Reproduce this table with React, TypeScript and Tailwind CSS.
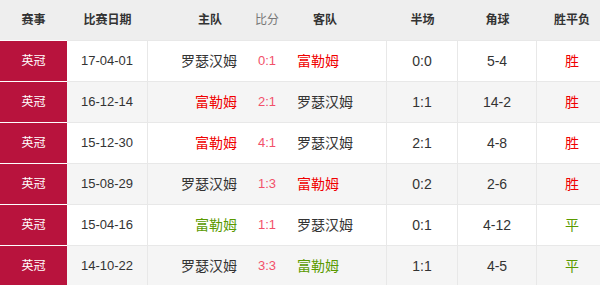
import React from "react";

type Row = {
  date: string;
  home: string;
  homeC: string;
  score: string;
  away: string;
  awayC: string;
  half: string;
  corner: string;
  res: string;
  resC: string;
};

const DARK = "text-[#333333]";
const RED = "text-[#f00000]";
const GREEN = "text-[#5a9a00]";

const rows: Row[] = [
  { date: "17-04-01", home: "罗瑟汉姆", homeC: DARK, score: "0:1", away: "富勒姆", awayC: RED, half: "0:0", corner: "5-4", res: "胜", resC: RED },
  { date: "16-12-14", home: "富勒姆", homeC: RED, score: "2:1", away: "罗瑟汉姆", awayC: DARK, half: "1:1", corner: "14-2", res: "胜", resC: RED },
  { date: "15-12-30", home: "富勒姆", homeC: RED, score: "4:1", away: "罗瑟汉姆", awayC: DARK, half: "2:1", corner: "4-8", res: "胜", resC: RED },
  { date: "15-08-29", home: "罗瑟汉姆", homeC: DARK, score: "1:3", away: "富勒姆", awayC: RED, half: "0:2", corner: "2-6", res: "胜", resC: RED },
  { date: "15-04-16", home: "富勒姆", homeC: GREEN, score: "1:1", away: "罗瑟汉姆", awayC: DARK, half: "0:1", corner: "4-12", res: "平", resC: GREEN },
  { date: "14-10-22", home: "罗瑟汉姆", homeC: DARK, score: "3:3", away: "富勒姆", awayC: GREEN, half: "1:1", corner: "4-5", res: "平", resC: GREEN },
];

const COLS = "grid grid-cols-[67px_81px_100px_38px_101px_71px_79px_70px]";
const font = { fontFamily: '"Liberation Sans", "Noto Sans CJK SC", sans-serif' };

export default function App() {
  return (
    <div className="w-[600px] h-[285px] overflow-hidden bg-white" style={font}>
      <div className="w-[607px]">
        <div className={`${COLS} h-[40px] bg-[#eeeeee] text-[12px] font-bold text-[#333333] items-center`}>
          <div className="text-center">赛事</div>
          <div className="text-center">比赛日期</div>
          <div className="text-right pr-[26px]">主队</div>
          <div className="text-center font-normal text-[#777777]">比分</div>
          <div className="text-left pl-[27px]">客队</div>
          <div className="text-center">半场</div>
          <div className="text-center">角球</div>
          <div className="text-center">胜平负</div>
        </div>
        {rows.map((r, i) => (
          <div
            key={i}
            className={`${COLS} h-[41px] border-t border-[#e8e8e8] ${i % 2 === 1 ? "bg-[#f5f5f5]" : "bg-white"}`}
          >
            <div className="-mt-px border-t border-white bg-[#b8133d] text-white text-[12px] flex items-center justify-center">
              英冠
            </div>
            <div className="border-r border-[#e8e8e8] flex items-center justify-center text-[13px] text-[#333333]">
              {r.date}
            </div>
            <div className={`flex items-center justify-end pr-[11px] text-[14px] ${r.homeC}`}>{r.home}</div>
            <div className="flex items-center justify-center text-[13px] text-[#f2506a]">{r.score}</div>
            <div className={`border-r border-[#e8e8e8] flex items-center justify-start pl-[11px] text-[14px] ${r.awayC}`}>
              {r.away}
            </div>
            <div className="border-r border-[#e8e8e8] flex items-center justify-center text-[14px] text-[#333333]">
              {r.half}
            </div>
            <div className="border-r border-[#e8e8e8] flex items-center justify-center text-[14px] text-[#333333]">
              {r.corner}
            </div>
            <div className={`flex items-center justify-center text-[14px] ${r.resC}`}>{r.res}</div>
          </div>
        ))}
      </div>
    </div>
  );
}
